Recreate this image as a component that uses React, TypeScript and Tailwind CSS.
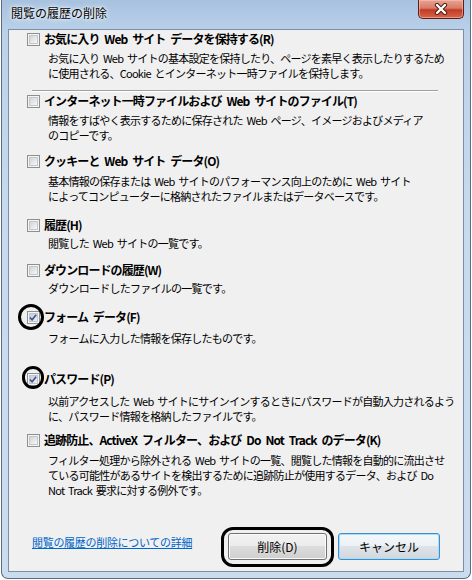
import React from 'react';

type Section = {
  label: string;
  desc: string[];
  checked?: boolean;
  divider?: boolean;
  labelMt: string;
  descMt: string;
};

const sections: Section[] = [
  {
    label: 'お気に入り Web サイト データを保持する(R)',
    desc: [
      'お気に入り Web サイトの基本設定を保持したり、ページを素早く表示したりするため',
      'に使用される、Cookie とインターネット一時ファイルを保持します。',
    ],
    divider: true,
    labelMt: 'mt-[1px]',
    descMt: 'mt-[4px]',
  },
  {
    label: 'インターネット一時ファイルおよび Web サイトのファイル(T)',
    desc: [
      '情報をすばやく表示するために保存された Web ページ、イメージおよびメディア',
      'のコピーです。',
    ],
    labelMt: 'mt-[1px]',
    descMt: 'mt-[4px]',
  },
  {
    label: 'クッキーと Web サイト データ(O)',
    desc: [
      '基本情報の保存または Web サイトのパフォーマンス向上のために Web サイト',
      'によってコンピューターに格納されたファイルまたはデータベースです。',
    ],
    labelMt: 'mt-[10px]',
    descMt: 'mt-[5px]',
  },
  {
    label: '履歴(H)',
    desc: ['閲覧した Web サイトの一覧です。'],
    labelMt: 'mt-[13px]',
    descMt: 'mt-[3px]',
  },
  {
    label: 'ダウンロードの履歴(W)',
    desc: ['ダウンロードしたファイルの一覧です。'],
    labelMt: 'mt-[11px]',
    descMt: 'mt-[3px]',
  },
  {
    label: 'フォーム データ(F)',
    desc: ['フォームに入力した情報を保存したものです。'],
    checked: true,
    labelMt: 'mt-[13px]',
    descMt: 'mt-[6px]',
  },
  {
    label: 'パスワード(P)',
    desc: [
      '以前アクセスした Web サイトにサインインするときにパスワードが自動入力されるよう',
      'に、パスワード情報を格納したファイルです。',
    ],
    checked: true,
    labelMt: 'mt-[25px]',
    descMt: 'mt-[7px]',
  },
  {
    label: '追跡防止、ActiveX フィルター、および Do Not Track のデータ(K)',
    desc: [
      'フィルター処理から除外される Web サイトの一覧、閲覧した情報を自動的に流出させ',
      'ている可能性があるサイトを検出するために追跡防止が使用するデータ、および Do',
      'Not Track 要求に対する例外です。',
    ],
    labelMt: 'mt-[8px]',
    descMt: 'mt-[5px]',
  },
];

function CheckBox({ checked }: { checked?: boolean }) {
  return (
    <div className="w-[13px] h-[13px] shrink-0 border border-[#8e8f8f] bg-[#f4f4f4] p-[1px]">
      <div
        className={`w-full h-full border border-[#c4c7cc] flex items-center justify-center ${
          checked
            ? 'bg-gradient-to-br from-[#c3cbe0] to-[#eef0f7]'
            : 'bg-gradient-to-br from-[#d2d4d8] to-[#f7f7f7]'
        }`}
      >
        {checked && (
          <svg width="9" height="9" viewBox="0 0 9 9" className="-ml-[1px]">
            <path d="M1 4.5 L3.5 7 L8 1.5" fill="none" stroke="#3f4f87" strokeWidth="1.8" />
          </svg>
        )}
      </div>
    </div>
  );
}

export default function App() {
  return (
    <div className="relative w-[472px] h-[580px] overflow-hidden bg-white font-['Noto_Sans_CJK_JP',sans-serif] text-black">
      {/* Window frame */}
      <div className="ml-[1px] w-[470px] h-[579px] rounded-b-[7px] border-x border-b border-[#5d6d80] bg-[linear-gradient(to_bottom,#a7c2df_0%,#bcd2ea_6%,#c8dbee_40%,#cbdcef_100%)] flex flex-col">
        {/* Title bar */}
        <div className="h-[29px] flex items-start justify-between pl-[9px] pr-[6px]">
          <span className="mt-[5px] text-[12px] leading-[16px] [text-shadow:0_0_6px_#ffffff,0_0_3px_#ffffff]">
            閲覧の履歴の削除
          </span>
          <div className="w-[46px] h-[19px] rounded-b-[5px] border-x border-b border-[#5a2016] bg-[linear-gradient(to_bottom,#e8a493_0%,#d77b67_45%,#c23b24_55%,#d8654a_100%)] shadow-[inset_0_0_0_1px_rgba(255,200,190,0.5)] flex items-center justify-center">
            <svg width="14" height="12" viewBox="0 0 14 12">
              <path d="M3 2 L11 10 M11 2 L3 10" stroke="#4a1a12" strokeWidth="4.2" strokeLinecap="round" />
              <path d="M3 2 L11 10 M11 2 L3 10" stroke="#ffffff" strokeWidth="2.4" strokeLinecap="round" />
            </svg>
          </div>
        </div>

        {/* Client area */}
        <div className="ml-[6px] w-[456px] h-[543px] border border-[#7d8fa6] bg-[#f0f0f0] flex flex-col">
          {sections.map((s, i) => (
            <div key={i}>
              <div className={`${s.labelMt} h-[16px] pl-[18px] flex items-center gap-[4px]`}>
                <CheckBox checked={s.checked} />
                <span className="text-[12px] font-bold tracking-[-0.9px] [word-spacing:3px] leading-[16px] whitespace-nowrap">
                  {s.label}
                </span>
              </div>
              <div className={`${s.descMt} pl-[39px]`}>
                {s.desc.map((line, j) => (
                  <div key={j} className="h-[15px] text-[11px] tracking-[-0.75px] [word-spacing:2px] leading-[15px] whitespace-nowrap">
                    {line}
                  </div>
                ))}
              </div>
              {s.divider && (
                <div className="mt-[9px] ml-[23px] w-[406px] border-t border-[#a0a0a0] border-b border-b-white" />
              )}
            </div>
          ))}

          {/* Bottom row */}
          <div className="mt-auto pb-[11px] pl-[23px] pr-[23px] flex items-start justify-between">
            <span className="mt-[1px] text-[11px] tracking-[-0.3px] leading-[16px] text-[#0066cc] underline whitespace-nowrap">
              閲覧の履歴の削除についての詳細
            </span>
            <div className="flex gap-[11px]">
              <button className="w-[99px] h-[27px] rounded-[3px] border border-[#707070] bg-[linear-gradient(to_bottom,#f2f2f2_0%,#ebebeb_50%,#dddddd_50%,#cfcfcf_100%)] shadow-[inset_0_0_0_1px_#fbfbfb] text-[12px] leading-[16px]">
                削除(D)
              </button>
              <button className="w-[102px] h-[27px] rounded-[3px] border border-[#3c8fcc] bg-[linear-gradient(to_bottom,#f4f8fb_0%,#eaf0f4_50%,#dde3e8_50%,#d2d8dc_100%)] shadow-[inset_0_0_0_1px_#a9dcf6] text-[12px] leading-[16px]">
                キャンセル
              </button>
            </div>
          </div>
        </div>
      </div>

      {/* Hand-drawn annotations */}
      <div className="absolute left-[18px] top-[304px] w-[26px] h-[26px] rounded-full border-[3px] border-black" />
      <div className="absolute left-[22px] top-[366px] w-[22px] h-[23px] rounded-full border-[3px] border-black" />
      <div className="absolute left-[221px] top-[527px] w-[113px] h-[40px] rounded-[12px] border-[3px] border-black" />
    </div>
  );
}
